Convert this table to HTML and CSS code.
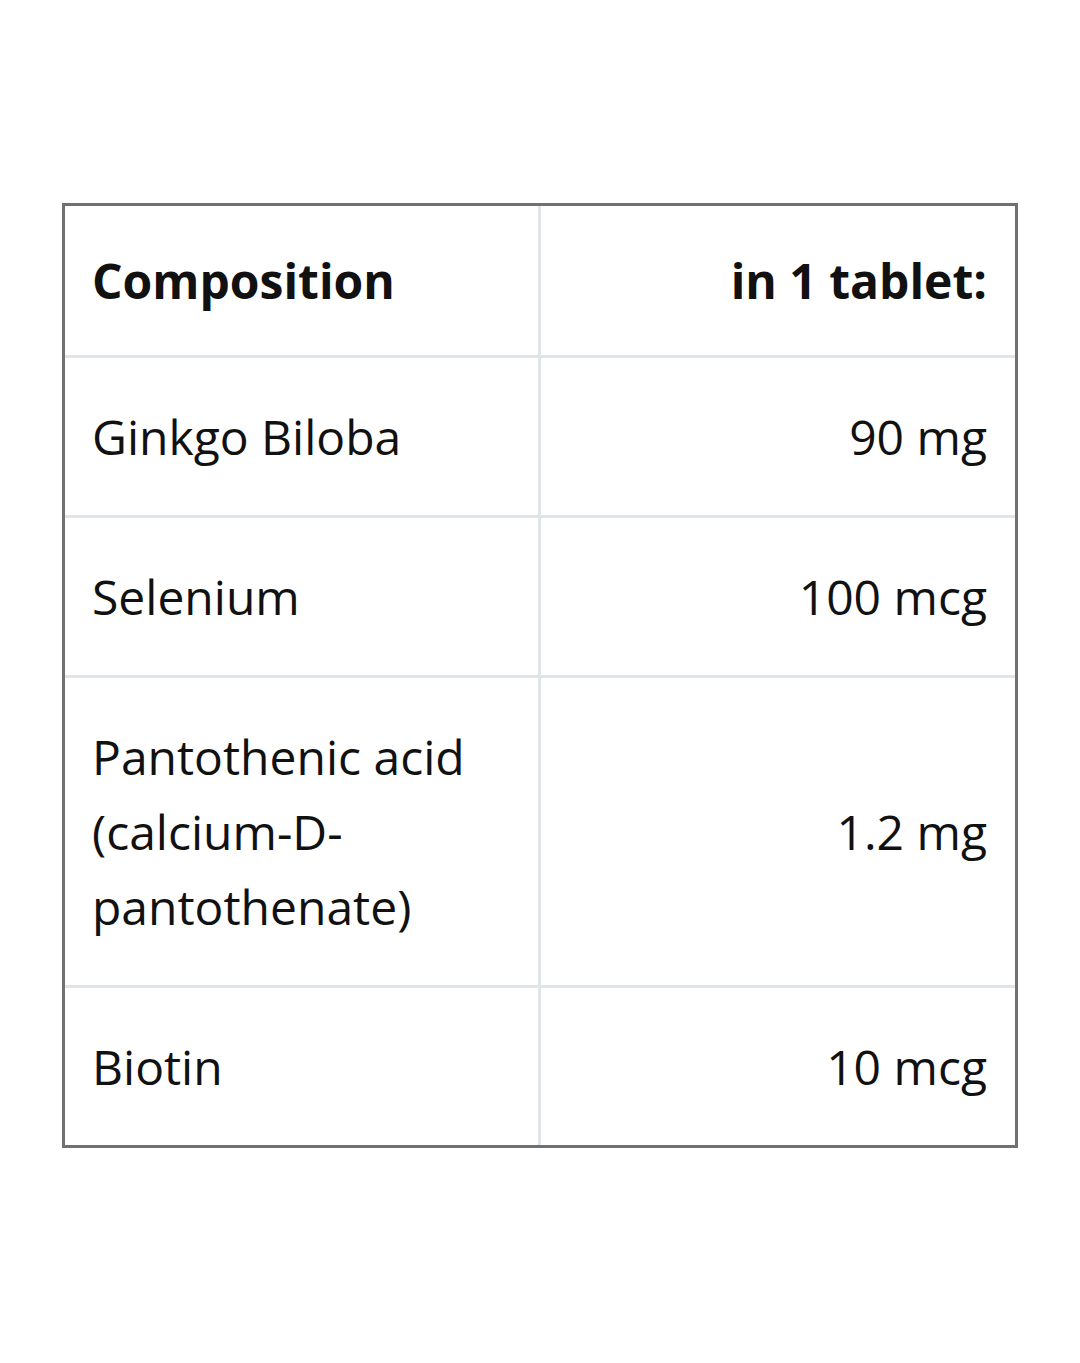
FILE: index.html
```html
<!DOCTYPE html>
<html>
<head>
<meta charset="utf-8">
<link rel="stylesheet" href="styles.css">
</head>
<body>
<div class="page">
  <table class="comp">
    <thead>
      <tr>
        <th class="name">Composition</th>
        <th class="amount">in 1 tablet:</th>
      </tr>
    </thead>
    <tbody>
      <tr><td class="name">Ginkgo Biloba</td><td class="amount">90 mg</td></tr>
      <tr><td class="name">Selenium</td><td class="amount">100 mcg</td></tr>
      <tr><td class="name">Pantothenic acid (calcium-D-pantothenate)</td><td class="amount">1.2 mg</td></tr>
      <tr><td class="name">Biotin</td><td class="amount">10 mcg</td></tr>
    </tbody>
  </table>
</div>
</body>
</html>
```
FILE: styles.css
```css
html, body {
  margin: 0;
  padding: 0;
  background: #ffffff;
}
.page {
  padding: 203px 62px 0 62px;
}
.comp {
  width: 956px;
  border-collapse: separate;
  border-spacing: 0;
  border: 3px solid #707070;
  table-layout: fixed;
  font-family: "Open Sans", "Noto Sans", sans-serif;
  font-size: 48px;
  line-height: 75px;
  color: #111111;
}
.comp th, .comp td {
  width: 50%;
  padding: 41px 28px 41px 27px;
  vertical-align: middle;
  border-bottom: 3px solid #dfe5e8;
}
.comp th {
  font-weight: 700;
  padding-top: 37px;
  padding-bottom: 37px;
}
.comp .name {
  text-align: left;
  border-right: 3px solid #dfe5e8;
}
.comp .amount {
  text-align: right;
}
.comp tbody tr:last-child td {
  border-bottom: none;
}
```
